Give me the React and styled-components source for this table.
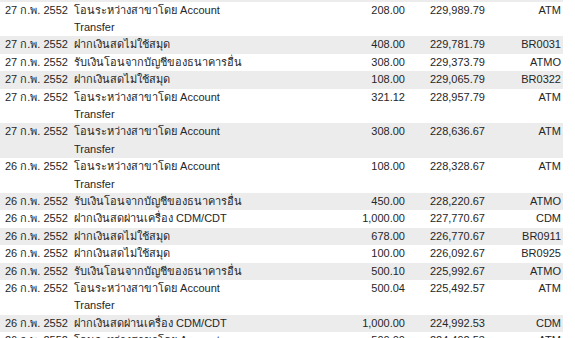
import React from 'react'
import styled, { createGlobalStyle } from 'styled-components'

const GlobalStyle = createGlobalStyle`
    html, body {
        margin: 0;
        padding: 0;
        background: #ffffff;
        overflow: hidden;
    }
`

const Statement = styled.div`
    width: 575px;
    height: 338px;
    overflow: hidden;
    font-family: Tahoma, "Liberation Sans", "DejaVu Sans", sans-serif;
    font-size: 11px;
    color: #262626;

    .list {
        width: 563px;
        margin-top: -15.9px;
    }
`

const Row = styled.div`
    display: grid;
    grid-template-columns: 74px 171px 160px 80px 78px;
    align-items: start;
    min-height: 17.4px;
    line-height: 17.4px;
    background: ${({ $shaded }) => ($shaded ? '#ececec' : '#ffffff')};

    .date {
        padding-left: 5px;
        white-space: nowrap;
    }

    .desc {
        white-space: normal;
    }

    .num {
        text-align: right;
        white-space: nowrap;
    }

    .channel {
        text-align: right;
        padding-right: 2px;
        white-space: nowrap;
    }
`

const rows = [
    ['', '', '', '', ''],
    ['27 ก.พ. 2552', 'โอนระหว่างสาขาโดย Account Transfer', '208.00', '229,989.79', 'ATM'],
    ['27 ก.พ. 2552', 'ฝากเงินสดไม่ใช้สมุด', '408.00', '229,781.79', 'BR0031'],
    ['27 ก.พ. 2552', 'รับเงินโอนจากบัญชีของธนาคารอื่น', '308.00', '229,373.79', 'ATMO'],
    ['27 ก.พ. 2552', 'ฝากเงินสดไม่ใช้สมุด', '108.00', '229,065.79', 'BR0322'],
    ['27 ก.พ. 2552', 'โอนระหว่างสาขาโดย Account Transfer', '321.12', '228,957.79', 'ATM'],
    ['27 ก.พ. 2552', 'โอนระหว่างสาขาโดย Account Transfer', '308.00', '228,636.67', 'ATM'],
    ['26 ก.พ. 2552', 'โอนระหว่างสาขาโดย Account Transfer', '108.00', '228,328.67', 'ATM'],
    ['26 ก.พ. 2552', 'รับเงินโอนจากบัญชีของธนาคารอื่น', '450.00', '228,220.67', 'ATMO'],
    ['26 ก.พ. 2552', 'ฝากเงินสดผ่านเครื่อง CDM/CDT', '1,000.00', '227,770.67', 'CDM'],
    ['26 ก.พ. 2552', 'ฝากเงินสดไม่ใช้สมุด', '678.00', '226,770.67', 'BR0911'],
    ['26 ก.พ. 2552', 'ฝากเงินสดไม่ใช้สมุด', '100.00', '226,092.67', 'BR0925'],
    ['26 ก.พ. 2552', 'รับเงินโอนจากบัญชีของธนาคารอื่น', '500.10', '225,992.67', 'ATMO'],
    ['26 ก.พ. 2552', 'โอนระหว่างสาขาโดย Account Transfer', '500.04', '225,492.57', 'ATM'],
    ['26 ก.พ. 2552', 'ฝากเงินสดผ่านเครื่อง CDM/CDT', '1,000.00', '224,992.53', 'CDM'],
    ['26 ก.พ. 2552', 'โอนระหว่างสาขาโดย Account Transfer', '500.00', '224,492.53', 'ATM'],
]

export default function App() {
    return (
        <Statement>
            <GlobalStyle />
            <div className="list">
                {rows.map(([date, desc, amount, balance, channel], i) => (
                    <Row key={i} $shaded={i % 2 === 0}>
                        <span className="date">{date}</span>
                        <span className="desc">{desc}</span>
                        <span className="num">{amount}</span>
                        <span className="num">{balance}</span>
                        <span className="channel">{channel}</span>
                    </Row>
                ))}
            </div>
        </Statement>
    )
}
